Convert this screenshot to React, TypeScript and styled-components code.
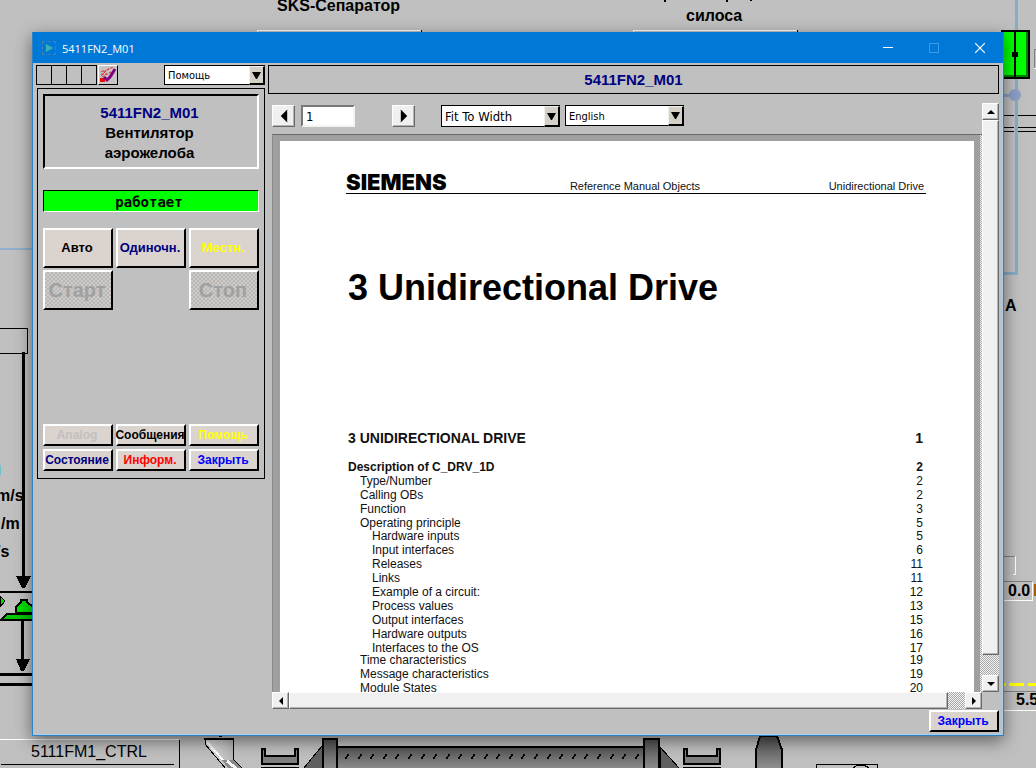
import React from 'react';
import styled, { createGlobalStyle, css } from 'styled-components';

const GlobalStyle = createGlobalStyle`
  *, *::before, *::after { box-sizing: border-box; }
  html, body { margin: 0; height: 100%; background: #c0c0c0; }
  body { font-family: "Liberation Sans", Arial, sans-serif; font-size: 12px; color: #000; }
  button, input, select { font: inherit; margin: 0; }
`;

const tahoma = '"DejaVu Sans Condensed", Tahoma, sans-serif';

const dither = css`
  background: repeating-conic-gradient(#a8a8a8 0% 25%, #f4f4f4 0% 50%) 0 0 / 2px 2px;
`;

/* ---------- process picture behind the window ---------- */

const Plant = styled.div`
  position: relative;
  height: 100vh;
  min-height: 600px;
  overflow: hidden;
  background: #c0c0c0;
`;

const Drawing = styled.svg`
  position: absolute;
  inset: 0;
  width: 100%;
  height: 100%;
`;

const Tag = styled.span<{ $x: number; $y: number; $plain?: boolean }>`
  position: absolute;
  left: ${p => p.$x}px;
  top: ${p => p.$y}px;
  font-size: 16px;
  line-height: 20px;
  font-weight: ${p => (p.$plain ? 400 : 700)};
  white-space: nowrap;
`;

/* ---------- window frame ---------- */

const Window = styled.section`
  position: absolute;
  inset: 32px;
  display: flex;
  flex-direction: column;
  background: #c0c0c0;
  border: 1px solid #2b83c6;
  border-top-color: #0078d7;
  box-shadow: 0 5px 16px rgba(0, 0, 0, 0.5), inset -1px -1px 0 #a9cbe6;
`;

const TitleBar = styled.header`
  display: flex;
  align-items: center;
  height: 30px;
  flex: none;
  padding-left: 9px;
  background: #0078d7;
  color: #fff;
  font-family: "Open Sans", "Segoe UI", sans-serif;
  font-size: 11px;
`;

const TitleText = styled.span`
  flex: 1;
  padding-left: 6px;
`;

const CaptionButton = styled.button`
  width: 46px;
  height: 30px;
  padding: 0;
  border: 0;
  background: none;
  color: #fff;
  display: flex;
  align-items: center;
  justify-content: center;
  &:disabled { color: #3f9be6; }
`;

const Body = styled.div`
  flex: 1;
  min-height: 0;
  display: flex;
  gap: 3px;
  padding: 2px 4px 3px 3px;
`;

/* ---------- left side ---------- */

const Side = styled.div`
  width: 229px;
  flex: none;
`;

const SideTools = styled.div`
  display: flex;
  height: 20px;
`;

const Slots = styled.div`
  display: flex;
  border-left: 1px solid #000;
`;

const Slot = styled.span`
  width: 15px;
  height: 20px;
  border: 1px solid #000;
  border-left: 0;
`;

const AckButton = styled.button`
  width: 20px;
  height: 20px;
  margin: 0 auto 0 1px;
  padding: 0;
  border: 1px solid;
  border-color: #fff #000 #000 #fff;
  background: #c9c5c5;
  display: flex;
`;

const SelectBox = styled.span<{ $width: number; $height: number; $size: number }>`
  position: relative;
  display: flex;
  width: ${p => p.$width}px;
  height: ${p => p.$height}px;
  font-family: ${tahoma};
  font-size: ${p => p.$size}px;
  select {
    appearance: none;
    width: 100%;
    border: 1px solid #000;
    border-radius: 0;
    background: #fff;
    color: #000;
    padding: 1px 18px 0 3px;
  }
`;

const SelectArrow = styled.span`
  position: absolute;
  top: 1px;
  right: 0;
  bottom: 0;
  width: 16px;
  display: flex;
  align-items: center;
  justify-content: center;
  pointer-events: none;
  background: #d4d0c8;
  border: solid;
  border-width: 1px 2px 2px 1px;
  border-color: #f2f0ec #000 #000 #f2f0ec;
`;

const Panel = styled.div`
  margin: 3px 0 0 1px;
  height: 391px;
  border: 1px solid #000;
  padding: 5px;
  display: flex;
  flex-direction: column;
`;

const NamePlate = styled.div`
  height: 75px;
  border: 2px solid;
  border-color: #000 #fff #fff #000;
  padding: 7px 3px 0 0;
  text-align: center;
  font-size: 15px;
  line-height: 20px;
  font-weight: 700;
`;

const Navy = styled.span`
  display: block;
  color: #000080;
`;

const Status = styled.output`
  display: block;
  height: 22px;
  margin-top: 21px;
  padding-right: 4px;
  border: 1px solid;
  border-color: #000 #fff #fff #000;
  background: #00ff00;
  text-align: center;
  font: 700 14px/22px "DejaVu Sans Mono", monospace;
`;

const ButtonGrid = styled.div<{ $row: number; $gap: number }>`
  display: grid;
  grid-template-columns: repeat(3, 70px);
  grid-auto-rows: ${p => p.$row}px;
  gap: ${p => p.$gap}px 3px;
`;

const ModeButtons = styled(ButtonGrid)`
  margin-top: 16px;
`;

const NavButtons = styled(ButtonGrid)`
  margin-top: auto;
  margin-bottom: 2px;
`;

const Push = styled.button<{ $color?: string; $size?: number; $column?: number }>`
  padding: 0 2px 0 0;
  min-width: 70px;
  border: 2px solid;
  border-color: #fff #000 #000 #fff;
  background: #dbd3cd;
  color: ${p => p.$color ?? '#000'};
  font-size: ${p => p.$size ?? 12}px;
  font-weight: 700;
  line-height: 16px;
  white-space: nowrap;
  display: flex;
  align-items: center;
  justify-content: center;
  ${p => p.$column && css`grid-column: ${p.$column};`}
`;

const BlockedPush = styled(Push)`
  background: repeating-conic-gradient(#b8b8b8 0% 25%, #cfcac6 0% 50%) 0 0 / 4px 4px;
`;

/* ---------- right side ---------- */

const Main = styled.div`
  flex: 1;
  min-width: 0;
  display: flex;
  flex-direction: column;
`;

const ObjectTitle = styled.h2`
  margin: 0;
  height: 29px;
  flex: none;
  border: 1px solid #000;
  text-align: center;
  font-size: 15px;
  line-height: 27px;
  color: #000080;
`;

const Viewer = styled.div`
  flex: 1;
  min-height: 0;
  margin: 9px 0 0 4px;
  display: grid;
  grid-template-columns: minmax(0, 1fr) 17px;
  grid-template-rows: minmax(0, 1fr) 17px;
`;

const Reader = styled.div`
  display: flex;
  flex-direction: column;
  min-height: 0;
`;

const ReaderTools = styled.div`
  display: flex;
  padding: 2px 0 7px;
`;

const Bevel = styled.button<{ $width: number; $height: number }>`
  width: ${p => p.$width}px;
  height: ${p => p.$height}px;
  flex: none;
  padding: 0;
  border: 1px solid;
  border-color: #fff #696969 #696969 #fff;
  box-shadow: inset -1px -1px 0 #b4b4b4;
  background: #f0f0f0;
  color: #000;
  display: flex;
  align-items: center;
  justify-content: center;
`;

const PageInput = styled.input`
  width: 54px;
  height: 22px;
  margin: 0 37px 0 6px;
  padding: 0 3px;
  border: 2px solid;
  border-color: #787878 #f4f4f4 #f4f4f4 #787878;
  background: #fff;
  font-family: ${tahoma};
  font-size: 13px;
`;

const Selectors = styled.div`
  display: flex;
  gap: 5px;
  margin-left: 26px;
`;

const Desk = styled.div`
  flex: 1;
  min-height: 0;
  display: flex;
  overflow: hidden;
  background: #a0a0a0;
  border-top: 1px solid #696969;
  border-left: 1px solid #8a8a8a;
  padding: 6px 0 0 7px;
`;

const Paper = styled.article`
  flex: 1;
  min-width: 0;
  margin-right: 6px;
  padding: 0 48px 0 66px;
  background: #fff;
  color: #111;
`;

const InnerTrack = styled.span`
  width: 2px;
  margin-top: -6px;
  ${dither}
`;

const PageHeader = styled.div`
  height: 53px;
  display: grid;
  grid-template-columns: 1fr auto 1fr;
  align-items: end;
  border-bottom: 1px solid #000;
  font-size: 11px;
  line-height: 14px;
  padding-right: 2px;
  span:last-child { text-align: right; }
`;

const Brand = styled.strong`
  font: 900 22px/21px Inter, sans-serif;
  color: #000;
`;

const Heading = styled.h1`
  margin: 73px 0 0 2px;
  font-size: 36px;
  line-height: 42px;
  color: #000;
`;

const Toc = styled.div`
  padding: 0 3px 0 2px;
`;

const TocRow = styled.div<{ $kind?: 'chapter' | 'section' }>`
  display: flex;
  justify-content: space-between;
  font-size: 12px;
  line-height: 14px;
  ${p => p.$kind === 'chapter' && css`
    margin-top: 121px;
    font-size: 14px;
    line-height: 16px;
    font-weight: 700;
  `}
  ${p => p.$kind === 'section' && css`
    margin-top: 15px;
    line-height: 13px;
    font-weight: 700;
  `}
`;

const TocList = styled.ul`
  list-style: none;
  margin: 0;
  padding: 0;
`;

const TocItem = styled.li<{ $level: number }>`
  > div > span:first-child { padding-left: ${p => p.$level * 12}px; }
  > ul { margin: -1px 0 -2px; }
`;

const VTrack = styled.div`
  display: flex;
  flex-direction: column;
  ${dither}
`;

const HTrack = styled.div`
  display: flex;
  ${dither}
`;

const Thumb = styled.span<{ $gap: 'bottom' | 'right' }>`
  flex: 1;
  background: #f0f0f0;
  border: 1px solid;
  border-color: #fff #696969 #696969 #fff;
  box-shadow: inset -1px -1px 0 #b4b4b4;
  ${p => (p.$gap === 'bottom' ? 'margin-bottom: 20px;' : 'margin-right: 17px;')}
`;

const Footer = styled.footer`
  display: flex;
  justify-content: flex-end;
  padding-top: 1px;
  height: 23px;
  flex: none;
`;

/* ---------- parts ---------- */

type Direction = 'up' | 'down' | 'left' | 'right';
const arrows: Record<Direction, string> = {
  up: 'M1 7L5 3L9 7Z',
  down: 'M1 3L9 3L5 7Z',
  left: 'M7 1L3 5L7 9Z',
  right: 'M3 1L7 5L3 9Z',
};

const Arrow = ({ to, size }: { to: Direction; size: number }) => (
  <svg width={size} height={size} viewBox="0 0 10 10" aria-hidden="true">
    <path d={arrows[to]} fill="#000" />
  </svg>
);

type PickerProps = { label: string; options: string[]; width: number; height: number; size: number };
const Picker = ({ label, options, width, height, size }: PickerProps) => (
  <SelectBox $width={width} $height={height} $size={size}>
    <select aria-label={label}>
      {options.map(o => <option key={o}>{o}</option>)}
    </select>
    <SelectArrow>
      <svg width="9" height="7" viewBox="0 0 9 7" aria-hidden="true"><path d="M0 0H9L5 7H4Z" /></svg>
    </SelectArrow>
  </SelectBox>
);

type Entry = { title: string; page: number; children?: Entry[] };
const contents: Entry[] = [
  { title: 'Type/Number', page: 2 },
  { title: 'Calling OBs', page: 2 },
  { title: 'Function', page: 3 },
  {
    title: 'Operating principle',
    page: 5,
    children: [
      { title: 'Hardware inputs', page: 5 },
      { title: 'Input interfaces', page: 6 },
      { title: 'Releases', page: 11 },
      { title: 'Links', page: 11 },
      { title: 'Example of a circuit:', page: 12 },
      { title: 'Process values', page: 13 },
      { title: 'Output interfaces', page: 15 },
      { title: 'Hardware outputs', page: 16 },
      { title: 'Interfaces to the OS', page: 17 },
    ],
  },
  { title: 'Time characteristics', page: 19 },
  { title: 'Message characteristics', page: 19 },
  { title: 'Module States', page: 20 },
];

const Entries = ({ items, level }: { items: Entry[]; level: number }) => (
  <TocList>
    {items.map(e => (
      <TocItem key={e.title} $level={level}>
        <TocRow><span>{e.title}</span><span>{e.page}</span></TocRow>
        {e.children && <Entries items={e.children} level={level + 1} />}
      </TocItem>
    ))}
  </TocList>
);

const Trough = ({ x }: { x: number }) => (
  <g>
    <path d={`M${x} 748h5v7h28v-7h5v17h-38z`} fill="#000" />
    <path d={`M${x + 2} 750h1v7h32v-7h1v13h-34z`} fill="#808080" />
    <rect x={x} y="767" width="38" height="1" />
  </g>
);

const PlantDrawing = () => (
  <Drawing aria-hidden="true" shapeRendering="crispEdges">
    <defs>
      <linearGradient id="shell" x1="0" y1="0" x2="0" y2="1">
        <stop offset="0" stopColor="#505050" />
        <stop offset="1" stopColor="#909090" />
      </linearGradient>
      <linearGradient id="glass" x1="0" y1="0" x2="1" y2="0">
        <stop offset="0" stopColor="#e4e4e4" />
        <stop offset="1" stopColor="#a4a4a4" />
      </linearGradient>
    </defs>

    {/* top: lower edges of the captions and their frames */}
    <path d="M664 0h2v2h-2zM726 0h2v2h-2zM750 0h2v1h-2z" />
    <path d="M257 32V30H421M633 32V30H797" fill="none" stroke="#fff" />
    <path d="M421 30h1v2h-1zM797 30h1v2h-1z" />

    {/* left: material flow */}
    <rect x="0" y="248" width="32" height="2" fill="#8fb0cc" />
    <path d="M0 328.500H27.500V353.500H0" fill="none" stroke="#000" />
    <rect x="22" y="352" width="3" height="226" />
    <path d="M16 576H31L25 588H22Z" />
    <rect x="0" y="465" width="1" height="10" fill="#6fc0c8" />
    <rect x="0" y="591" width="32" height="2" />
    <path d="M0 596L5 601L0 607Z" fill="#00e000" stroke="#000" />
    <path d="M16 613V607L21 602V600H27V602L33 607V613Z" fill="#00e000" stroke="#000" strokeWidth="2" />
    <path d="M1 620L7 614H34V620Z" fill="#00c800" stroke="#000" strokeWidth="2" />
    <rect x="21" y="621" width="3" height="40" />
    <path d="M16 659H30L24 671H21Z" />
    <rect x="0" y="673" width="32" height="3" />
    <rect x="0" y="683" width="32" height="3" />

    {/* bottom: controller frame, hopper, conveyor */}
    <rect x="0" y="739" width="179" height="1" fill="#fff" />
    <rect x="179" y="740" width="1" height="28" />
    <rect x="1" y="764" width="173" height="1" />
    <path d="M205 739H233V759L243 769H226L205 744Z" fill="url(#glass)" stroke="#000" />
    <path d="M204 738h30v2h-30zM219 736h3v1h-3z" />
    <path d="M207 742L223 760" stroke="#fff" strokeWidth="2" />
    <path d="M222 760H233L243 769H229Z" fill="#888" />
    <path d="M227 761L237 769" stroke="#f4f4f4" strokeWidth="3" />
    <Trough x={261} />
    <path d="M303 769L322 746V769Z" fill="#606060" stroke="#000" />
    <rect x="338" y="746" width="306" height="24" fill="url(#shell)" />
    <rect x="338" y="746" width="306" height="2" />
    <rect x="323" y="739" width="14" height="32" fill="url(#shell)" stroke="#000" strokeWidth="2" />
    <rect x="644" y="739" width="15" height="32" fill="url(#shell)" stroke="#000" strokeWidth="2" />
    {Array.from({ length: 24 }, (_, i) => (
      <path key={i} d={`M${345 + Math.round(i * 12.6)} 759v-2h1v-1h1v-2h2v2h-1v1h-1v2z`} />
    ))}
    <path d="M660 747L680 769H660Z" fill="#606060" stroke="#000" />
    <Trough x={683} />
    <path d="M760 736L756 750V769H782V750L777 736Z" fill="url(#shell)" stroke="#000" strokeWidth="2" />
    <rect x="816.500" y="764.500" width="61" height="10" fill="none" stroke="#000" />
    <ellipse cx="861" cy="770" rx="8" ry="5" fill="none" stroke="#000" />

    {/* right: valve and piping */}
    <rect x="1001" y="30" width="29" height="49" />
    <rect x="1002" y="32" width="26" height="45" fill="#008000" />
    <rect x="1002" y="32" width="24" height="43" fill="#00ff00" />
    <rect x="1014" y="32" width="2" height="45" />
    <rect x="1012" y="52" width="6" height="5" />
    <path d="M1015 0h3v30h-3zM1015 79h3v195h-3zM1004 272h14v3h-14z" fill="#86adc6" />
    <rect x="1004" y="94" width="8" height="3" fill="#8fa0c4" />
    <circle cx="1015" cy="95" r="6" fill="#8d9fc8" shapeRendering="auto" />
    <path d="M1004 115.500H1014M1018 115.500H1036M1004 127.500H1014M1018 127.500H1036M1004 131.500H1014M1018 131.500H1036" stroke="#000" />
    <path d="M1036 49.500H1034.500V68" fill="none" stroke="#808080" />
    <rect x="1034" y="68" width="2" height="1" fill="#fff" />
    <path d="M1004 556.500H1015" stroke="#808080" />
    <path d="M1015.500 556V574.500H1013" fill="none" stroke="#fff" />
    <path d="M1004 581.500H1032M1004 691.500H1036" stroke="#808080" />
    <path d="M1032.500 582V600.500H1004M1004 710.500H1036" fill="none" stroke="#fff" />
    <rect x="1034" y="584" width="2" height="12" fill="#a85a10" />
    <path d="M1004 683h2v3h-2zM1009 683h15v3h-15zM1028 683h8v3h-8z" fill="#ffff00" />
  </Drawing>
);

const App = () => (
  <>
    <GlobalStyle />
    <Plant>
      <PlantDrawing />
      <Tag $x={277} $y={-4}>SKS-Сепаратор</Tag>
      <Tag $x={686} $y={6}>силоса</Tag>
      <Tag $x={-4} $y={486}>m/s</Tag>
      <Tag $x={1} $y={514}>/m</Tag>
      <Tag $x={-4} $y={542}>/s</Tag>
      <Tag $x={31} $y={742} $plain>5111FM1_CTRL</Tag>
      <Tag $x={1005} $y={296}>A</Tag>
      <Tag $x={1008} $y={581}>0.0</Tag>
      <Tag $x={1016} $y={690}>5.5</Tag>

      <Window aria-label="5411FN2_M01">
        <TitleBar>
          <svg width="14" height="14" viewBox="0 0 14 14" aria-hidden="true">
            <path d="M4 3L11 7L4 11Z" fill="#3fb0b4" />
            <path d="M0.500 3V0.500H3M5.500 0.500H8.500M11 0.500H13.500V3M13.500 5.500V8.500M13.500 11V13.500H11M8.500 13.500H5.500M3 13.500H0.500V11M0.500 8.500V5.500" fill="none" stroke="#4f7fa8" />
          </svg>
          <TitleText>5411FN2_M01</TitleText>
          <CaptionButton aria-label="Minimize">
            <svg width="10" height="10"><path d="M0 4.500H10" stroke="currentColor" /></svg>
          </CaptionButton>
          <CaptionButton aria-label="Maximize" disabled>
            <svg width="10" height="10"><rect x="0.500" y="0.500" width="9" height="9" fill="none" stroke="currentColor" /></svg>
          </CaptionButton>
          <CaptionButton aria-label="Close">
            <svg width="10" height="10"><path d="M0 0L10 10M10 0L0 10" stroke="currentColor" strokeWidth="1.200" /></svg>
          </CaptionButton>
        </TitleBar>

        <Body>
          <Side>
            <SideTools>
              <Slots><Slot /><Slot /><Slot /><Slot /></Slots>
              <AckButton aria-label="Квитировать">
                <svg width="18" height="18" viewBox="0 0 18 18" aria-hidden="true">
                  <path d="M1 12h5v4H1z" fill="#e01010" />
                  <path d="M2 10L10 2M4 6L14 1M3 11L12 6M2 6L5 4M2 8H8" stroke="#e03030" strokeDasharray="3 1" fill="none" />
                  <path d="M5 11L8 14L11 11L16 3" stroke="#800080" strokeWidth="3" fill="none" />
                </svg>
              </AckButton>
              <Picker label="Вид" options={['Помощь']} width={101} height={20} size={11} />
            </SideTools>
            <Panel>
              <NamePlate><Navy>5411FN2_M01</Navy>Вентилятор<br />аэрожелоба</NamePlate>
              <Status>работает</Status>
              <ModeButtons $row={40} $gap={2}>
                <Push $size={13}>Авто</Push>
                <Push $size={13} $color="#000080">Одиночн.</Push>
                <Push $size={13} $color="#ffff00">Местн.</Push>
                <BlockedPush $size={20} $color="#a0a0a0" disabled>Старт</BlockedPush>
                <BlockedPush $size={20} $color="#a0a0a0" $column={3} disabled>Стоп</BlockedPush>
              </ModeButtons>
              <NavButtons $row={22} $gap={3}>
                <Push $color="#c0c0c0" disabled>Analog</Push>
                <Push>Сообщения</Push>
                <Push $color="#ffff00">Помощь</Push>
                <Push $color="#000080">Состояние</Push>
                <Push $color="#ff0000">Информ.</Push>
                <Push $color="#0000ff">Закрыть</Push>
              </NavButtons>
            </Panel>
          </Side>

          <Main>
            <ObjectTitle>5411FN2_M01</ObjectTitle>
            <Viewer>
              <Reader>
                <ReaderTools>
                  <Bevel $width={23} $height={22} aria-label="Previous page"><Arrow to="left" size={16} /></Bevel>
                  <PageInput aria-label="Page" defaultValue="1" />
                  <Bevel $width={23} $height={22} aria-label="Next page"><Arrow to="right" size={16} /></Bevel>
                  <Selectors>
                    <Picker label="Zoom" options={['Fit To Width']} width={119} height={22} size={13} />
                    <Picker label="Language" options={['English']} width={119} height={21} size={11} />
                  </Selectors>
                </ReaderTools>
                <Desk>
                  <Paper>
                    <PageHeader>
                      <Brand>SIEMENS</Brand>
                      <span>Reference Manual Objects</span>
                      <span>Unidirectional Drive</span>
                    </PageHeader>
                    <Heading>3 Unidirectional Drive</Heading>
                    <Toc>
                      <TocRow $kind="chapter"><span>3 UNIDIRECTIONAL DRIVE</span><span>1</span></TocRow>
                      <TocRow $kind="section"><span>Description of C_DRV_1D</span><span>2</span></TocRow>
                      <Entries items={contents} level={1} />
                    </Toc>
                  </Paper>
                  <InnerTrack />
                </Desk>
              </Reader>
              <VTrack>
                <Bevel $width={17} $height={17} aria-label="Scroll up"><Arrow to="up" size={10} /></Bevel>
                <Thumb $gap="bottom" />
                <Bevel $width={17} $height={17} aria-label="Scroll down"><Arrow to="down" size={10} /></Bevel>
              </VTrack>
              <HTrack>
                <Bevel $width={17} $height={17} aria-label="Scroll left"><Arrow to="left" size={10} /></Bevel>
                <Thumb $gap="right" />
                <Bevel $width={17} $height={17} aria-label="Scroll right"><Arrow to="right" size={10} /></Bevel>
              </HTrack>
            </Viewer>
            <Footer><Push $color="#0000ff">Закрыть</Push></Footer>
          </Main>
        </Body>
      </Window>
    </Plant>
  </>
);

export default App;
